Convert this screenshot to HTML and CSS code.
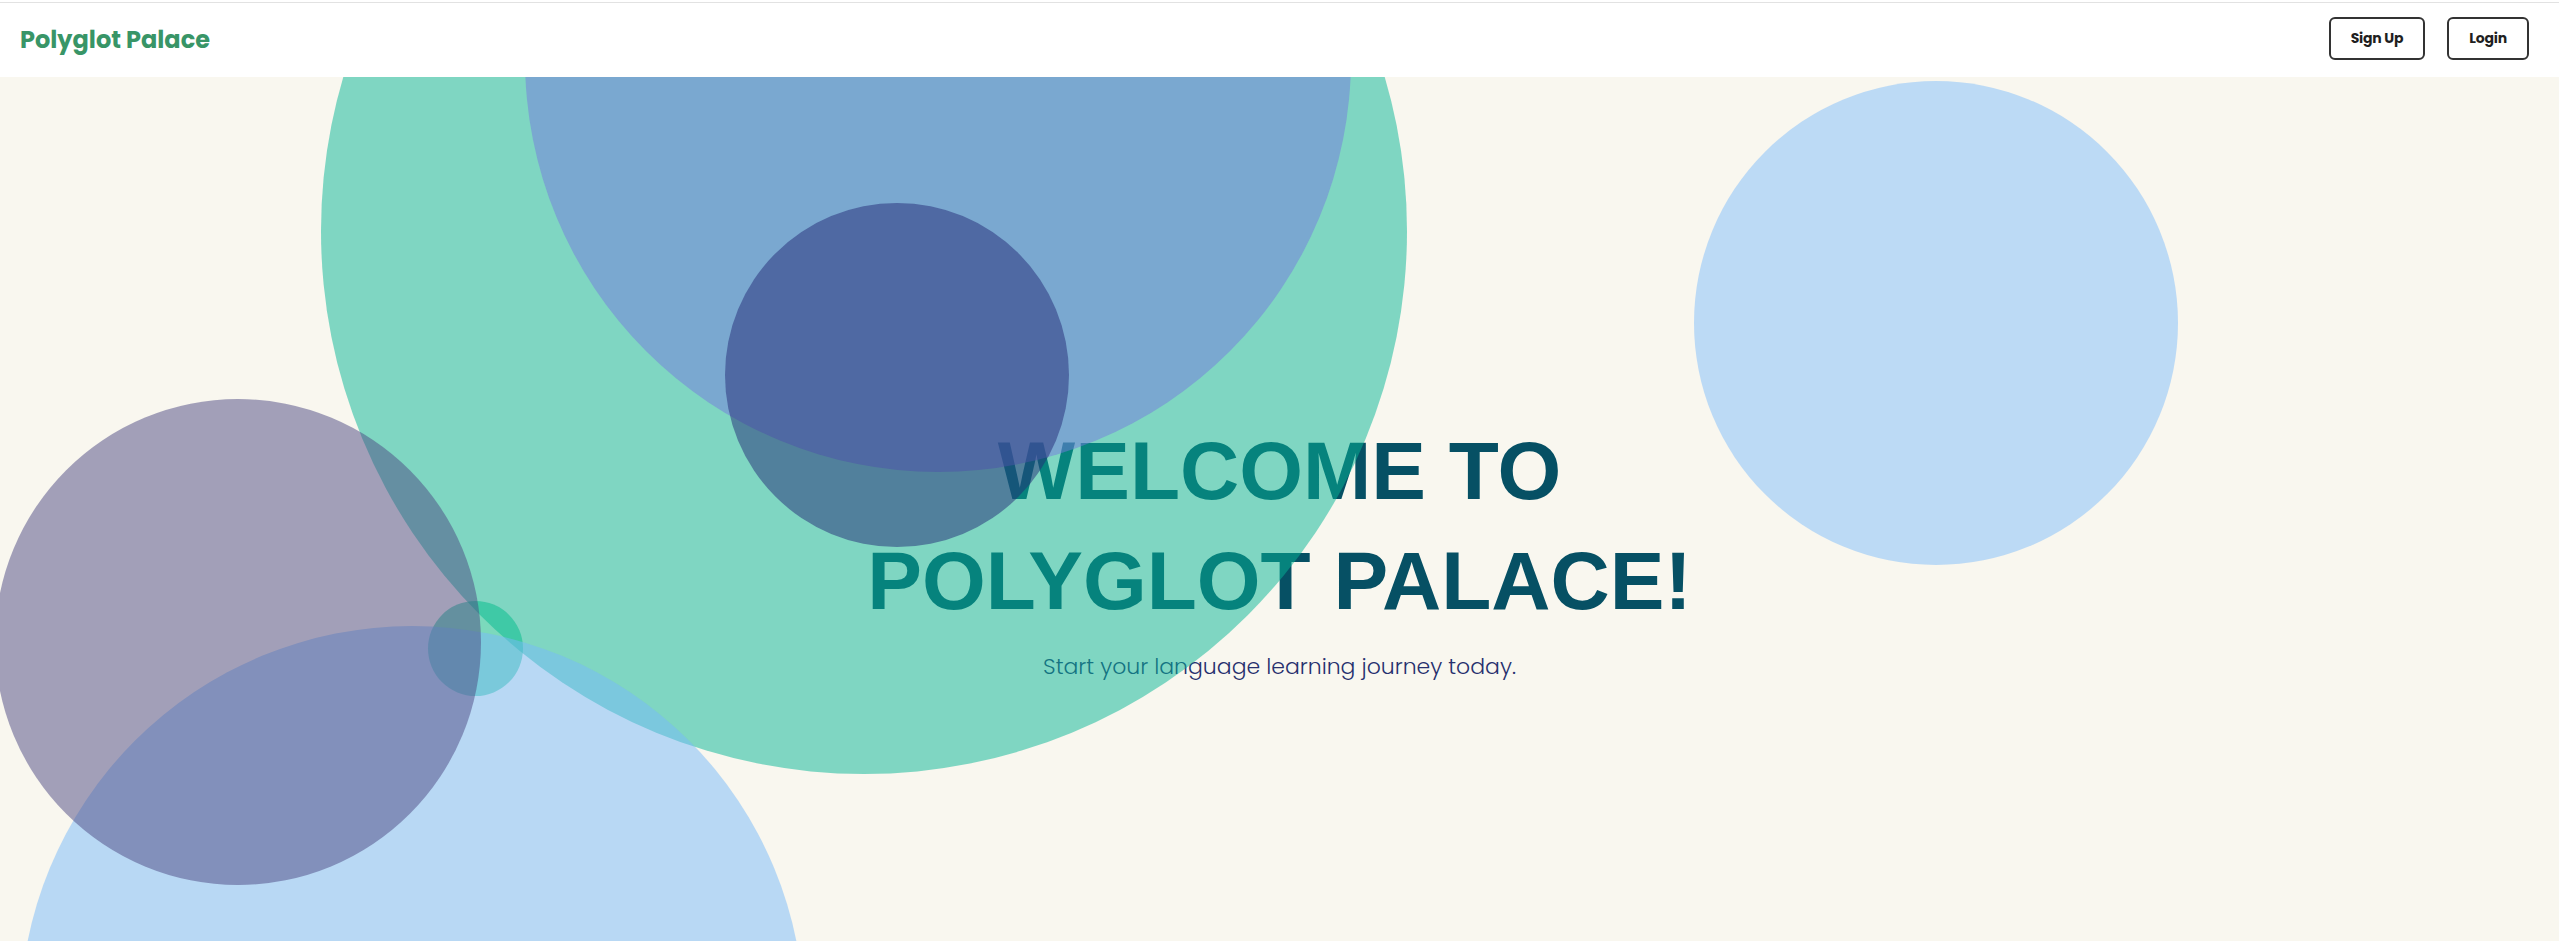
FILE: index.html
```html
<!DOCTYPE html>
<html lang="en">
<head>
<meta charset="utf-8">
<title>Polyglot Palace</title>
<link rel="stylesheet" href="styles.css">
</head>
<body>
<header class="site-header">
  <div class="logo">Polyglot Palace</div>
  <nav class="actions">
    <button class="btn">Sign Up</button>
    <button class="btn">Login</button>
  </nav>
</header>
<main class="hero">
  <div class="hero-content">
    <h1 class="hero-title">WELCOME TO<br>POLYGLOT PALACE!</h1>
    <p class="hero-sub">Start your language learning journey today.</p>
  </div>
  <div class="bubble b-green"></div>
  <div class="bubble b-blue"></div>
  <div class="bubble b-navy"></div>
  <div class="bubble b-sky"></div>
  <div class="bubble b-teal"></div>
  <div class="bubble b-sky-low"></div>
  <div class="bubble b-purple"></div>
</main>
</body>
</html>
```
FILE: styles.css
```css
html, body {
  margin: 0;
  padding: 0;
  background: #ffffff;
}
body {
  font-family: "Poppins", "Open Sans", "Liberation Sans", sans-serif;
  overflow: hidden;
  height: 942px;
}
.site-header {
  margin-top: 2px;
  border-top: 1px solid #e2e2e2;
  height: 75px;
  background: #ffffff;
  display: flex;
  align-items: center;
  justify-content: space-between;
  padding: 0 30px 0 20px;
  box-sizing: border-box;
}
.logo {
  font-family: "Poppins", "Open Sans", sans-serif;
  font-weight: 700;
  font-size: 24px;
  color: #389567;
  margin-top: -2px;
}
.actions {
  display: flex;
  gap: 22px;
  margin-top: -4px;
}
.btn {
  font-family: "Poppins", "Open Sans", sans-serif;
  font-weight: 700;
  font-size: 14px;
  color: #1f1f1f;
  background: #ffffff;
  border: 2px solid #333333;
  border-radius: 6px;
  height: 43px;
  padding: 0 20px;
  letter-spacing: -0.2px;
}
.hero {
  position: relative;
  height: 864px;
  background: #f9f7ef;
  overflow: hidden;
}
.hero-content {
  padding-top: 339px;
  text-align: center;
}
.hero-title {
  margin: 0;
  font-family: "Liberation Sans", Arial, sans-serif;
  font-weight: 700;
  font-size: 82px;
  line-height: 110px;
  color: #065064;
}
.hero-sub {
  margin: 14px 0 0;
  font-family: "Poppins", "Open Sans", sans-serif;
  font-weight: 300;
  font-size: 22px;
  color: #27306e;
}
.bubble {
  position: absolute;
  border-radius: 50%;
  opacity: 0.5;
}
.b-green {
  left: 321px;
  top: -389px;
  width: 1086px;
  height: 1086px;
  background: #05b595;
}
.b-blue {
  left: 525px;
  top: -431px;
  width: 826px;
  height: 826px;
  background: #757ade;
}
.b-navy {
  left: 725px;
  top: 126px;
  width: 344px;
  height: 344px;
  background: #242a76;
}
.b-sky {
  left: 1694px;
  top: 4px;
  width: 484px;
  height: 484px;
  background: #7fbdfb;
}
.b-sky-low {
  left: 20px;
  top: 549px;
  width: 784px;
  height: 784px;
  background: #77b9f9;
}
.b-purple {
  left: -5px;
  top: 322px;
  width: 486px;
  height: 486px;
  background: #4b4781;
}
.b-teal {
  left: 428px;
  top: 524px;
  width: 95px;
  height: 95px;
  background: #00bc8a;
}
```
